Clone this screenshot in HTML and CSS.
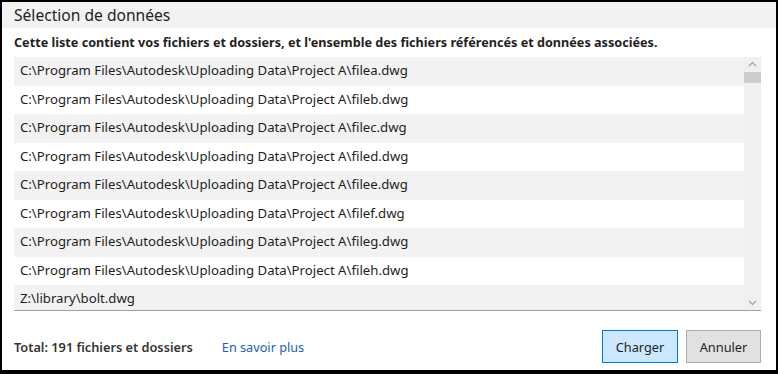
FILE: index.html
```html
<!DOCTYPE html>
<html lang="fr">
<head>
<meta charset="utf-8">
<title>Sélection de données</title>
<link rel="stylesheet" href="styles.css">
</head>
<body>
<div class="window">
  <div class="header">Sélection de données</div>
  <div class="desc">Cette liste contient vos fichiers et dossiers, et l'ensemble des fichiers référencés et données associées.</div>
  <div class="list">
    <div class="rows">
      <div class="row">C:\Program Files\Autodesk\Uploading Data\Project A\filea.dwg</div>
      <div class="row">C:\Program Files\Autodesk\Uploading Data\Project A\fileb.dwg</div>
      <div class="row">C:\Program Files\Autodesk\Uploading Data\Project A\filec.dwg</div>
      <div class="row">C:\Program Files\Autodesk\Uploading Data\Project A\filed.dwg</div>
      <div class="row">C:\Program Files\Autodesk\Uploading Data\Project A\filee.dwg</div>
      <div class="row">C:\Program Files\Autodesk\Uploading Data\Project A\filef.dwg</div>
      <div class="row">C:\Program Files\Autodesk\Uploading Data\Project A\fileg.dwg</div>
      <div class="row">C:\Program Files\Autodesk\Uploading Data\Project A\fileh.dwg</div>
      <div class="row">Z:\library\bolt.dwg</div>
    </div>
    <div class="scrollbar">
      <svg class="arrow" width="17" height="14" viewBox="0 0 17 14"><path d="M5 9 L8.5 5.5 L12 9" fill="none" stroke="#a0a0a0" stroke-width="1.2"/></svg>
      <div class="thumb"></div>
      <div class="track"></div>
      <svg class="arrow" width="17" height="14" viewBox="0 0 17 14"><path d="M5 5 L8.5 8.5 L12 5" fill="none" stroke="#a0a0a0" stroke-width="1.2"/></svg>
    </div>
  </div>
  <div class="footer">
    <span class="total">Total: 191 fichiers et dossiers</span>
    <a class="link" href="#">En savoir plus</a>
    <span class="spacer"></span>
    <button class="btn primary">Charger</button>
    <button class="btn">Annuler</button>
  </div>
</div>
</body>
</html>
```
FILE: styles.css
```css
html, body {
  margin: 0;
  padding: 0;
  background: #000;
}
body {
  width: 778px;
  height: 374px;
  overflow: hidden;
}
.window {
  margin: 2px 2px 0 2px;
  height: 368px;
  background: #fff;
  font-family: "Noto Sans", "Open Sans", sans-serif;
  color: #1f1f1f;
  display: flex;
  flex-direction: column;
}
.header {
  height: 26px;
  background: #f2f2f2;
  padding-left: 12px;
  font-size: 15.6px;
  line-height: 26px;
  color: #222;
}
.desc {
  padding: 6px 12px 7px 12px;
  font-size: 12.65px;
  font-weight: bold;
  line-height: 16px;
  white-space: nowrap;
}
.list {
  margin: 0 15px 0 12px;
  height: 253px;
  border-bottom: 1px solid #a0a0a0;
  display: flex;
  overflow: hidden;
}
.rows {
  flex: 1;
  overflow: hidden;
}
.row {
  height: 28.5px;
  line-height: 27.5px;
  padding-left: 6px;
  font-size: 13.2px;
  color: #1e1e1e;
  white-space: nowrap;
}
.row:nth-child(odd) {
  background: #f2f2f2;
}
.scrollbar {
  width: 17px;
  background: #f0f0f0;
  display: flex;
  flex-direction: column;
}
.arrow {
  display: block;
  flex: none;
}
.thumb {
  height: 11px;
  margin: 1px 0 0 0;
  background: #cdcdcd;
}
.track {
  flex: 1;
}
.footer {
  flex: 1;
  display: flex;
  align-items: center;
  padding: 18px 15px 6px 12px;
}
.total {
  font-size: 12.75px;
  font-weight: 600;
  color: #333;
}
.link {
  margin-left: 29px;
  font-size: 12.7px;
  color: #1a62b8;
  text-decoration: none;
}
.spacer {
  flex: 1;
}
.btn {
  width: 75px;
  height: 33px;
  font-family: "Noto Sans", "Open Sans", sans-serif;
  font-size: 12.8px;
  color: #1f1f1f;
  background: #e1e1e1;
  border: 1px solid #adadad;
  padding: 0;
  margin-left: 8px;
}
.btn.primary {
  width: 76px;
  background: #cce8ff;
  border-color: #0078d7;
}
```
